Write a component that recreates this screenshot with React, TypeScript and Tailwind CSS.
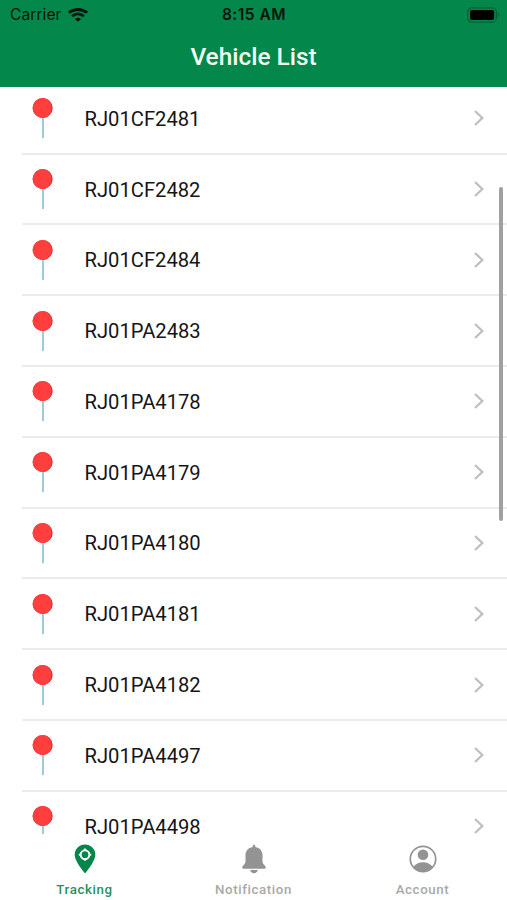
import React from 'react';

const vehicles = [
  'RJ01CF2481',
  'RJ01CF2482',
  'RJ01CF2484',
  'RJ01PA2483',
  'RJ01PA4178',
  'RJ01PA4179',
  'RJ01PA4180',
  'RJ01PA4181',
  'RJ01PA4182',
  'RJ01PA4497',
  'RJ01PA4498',
];

function WifiIcon() {
  return (
    <svg width="20" height="14" viewBox="0 0 20 14" fill="none" stroke="#02150a">
      <path d="M.9 4.7C6 .4 14 .4 19.1 4.7" strokeWidth="2.9" />
      <path d="M4.1 8.2c3.3-3 8.5-3 11.8 0" strokeWidth="2.7" />
      <path d="M10 13.8 7 10.9c1.7-1.5 4.3-1.5 6 0z" fill="#02150a" stroke="none" />
    </svg>
  );
}

function BatteryIcon() {
  return (
    <svg width="33" height="16" viewBox="0 0 33 16" fill="none">
      <rect x="0.8" y="0.8" width="28.6" height="14.4" rx="4.2" stroke="#046234" strokeWidth="1.3" />
      <rect x="3" y="3" width="24.2" height="10" rx="2" fill="#000" />
      <path d="M31 5.7c1.7.7 1.7 3.9 0 4.6z" fill="#046234" />
    </svg>
  );
}

function PinIcon() {
  return (
    <svg width="22" height="42" viewBox="0 0 22 42" className="shrink-0">
      <path d="M10 20h2v20.5l-1 1-1-1z" fill="#9fcbd8" />
      <circle cx="10.7" cy="11" r="10" fill="#d8323b" />
      <path d="M17.3 3.6A10 10 0 1 0 15.5 19.8C20.5 15.5 20.3 8 17.3 3.6z" fill="#ff3e3e" />
    </svg>
  );
}

function ChevronIcon() {
  return (
    <svg width="12" height="18" viewBox="0 0 12 18" fill="none" stroke="#c0c0c2" strokeWidth="2.4">
      <path d="M2 2l7.3 7L2 16" />
    </svg>
  );
}

function TrackingIcon() {
  return (
    <svg width="22" height="30" viewBox="0 0 22 30">
      <path d="M11 .5C5.2 .5 .7 4.9 .7 10.6.7 17.8 11 29.5 11 29.5S21.3 17.8 21.3 10.6C21.3 4.9 16.8.5 11 .5z" fill="#02864a" />
      <circle cx="11" cy="10.7" r="4.3" fill="none" stroke="#fff" strokeWidth="1.9" />
      <path d="M11 4.1 13.4 6.7H8.6zM11 17.3 8.6 14.7h4.8zM4.4 10.7 7 8.3v4.8zM17.6 10.7 15 13.1V8.3z" fill="#fff" />
    </svg>
  );
}

function BellIcon() {
  return (
    <svg width="26" height="30" viewBox="0 0 26 30" fill="#939393">
      <path d="M13 .8c-.9 0-1.3.6-1.3 1.4v.8C7.1 3.7 4.6 7 4.5 11v6.5c0 2.7-3.3 4.3-3.3 6 0 .8.5 1.2 1.3 1.2h21c.8 0 1.3-.4 1.3-1.2 0-1.7-3.3-3.3-3.3-6V11c-.1-4-2.6-7.300-7.200-8v-.8C14.300 1.400 13.900.8 13 .8z" />
      <path d="M9.2 26h7.6c-.4 1.9-1.8 3.2-3.8 3.2S9.6 27.9 9.2 26z" />
    </svg>
  );
}

function AccountIcon() {
  return (
    <svg width="28" height="28" viewBox="0 0 28 28">
      <circle cx="14" cy="14" r="12.7" fill="none" stroke="#939393" strokeWidth="1.7" />
      <circle cx="14" cy="9.7" r="5.3" fill="#939393" />
      <path d="M4.1 22C6.5 18.8 9.8 17.2 14 17.2s7.5 1.6 9.9 4.8a12.8 12.8 0 0 1-19.8 0z" fill="#939393" />
    </svg>
  );
}

function VehicleRow({ name }: { name: string }) {
  return (
    <li className="ml-[22px] flex h-[70.8px] shrink-0 items-center border-b-2 border-[#ebebec] pl-[10px] pr-[22px]">
      <PinIcon />
      <span className="ml-[30.5px] flex-1 pt-[1px] text-[20.2px] leading-4 text-[#151515]">{name}</span>
      <ChevronIcon />
    </li>
  );
}

function Tab({ icon, label, active }: { icon: React.ReactNode; label: string; active?: boolean }) {
  return (
    <div className={`flex flex-1 flex-col items-center ${active ? 'text-[#299060]' : 'text-[#a9a9a9]'}`}>
      <div className="flex h-[30px] items-center">{icon}</div>
      <span className="mt-[8px] text-[13.3px] font-medium leading-4 tracking-[0.6px]">{label}</span>
    </div>
  );
}

export default function App() {
  return (
    <div className="relative flex h-[900px] w-full flex-col overflow-hidden bg-white font-[Roboto,sans-serif]">
      <header className="h-[87px] shrink-0 bg-[#03874b]">
        <div className="grid h-[30px] grid-cols-3 items-center pl-[10px] pr-[7px] font-[Inter,sans-serif] text-[#02150a]">
          <div className="flex items-center gap-[6px] text-[15.5px] tracking-[0.1px]">
            <span>Carrier</span>
            <WifiIcon />
          </div>
          <span className="pr-[2px] text-center text-[15.5px] font-semibold tracking-[0.5px]">8:15 AM</span>
          <div className="flex justify-end">
            <BatteryIcon />
          </div>
        </div>
        <h1 className="pt-[12px] text-center text-[24.4px] font-medium leading-[30px] text-[#f4fff2]">Vehicle List</h1>
      </header>

      <ul className="flex h-[747px] shrink-0 flex-col">
        <li className="-mt-[3.2px] h-0 shrink-0" />
        {vehicles.map((name) => (
          <VehicleRow key={name} name={name} />
        ))}
      </ul>

      {/* scroll indicator */}
      <div className="absolute right-[4px] top-[187px] h-[334px] w-[4px] rounded-full bg-[#a0a0a0]" />

      <nav className="relative flex flex-1 bg-white pt-[10px]">
        <Tab icon={<TrackingIcon />} label="Tracking" active />
        <Tab icon={<BellIcon />} label="Notification" />
        <Tab icon={<AccountIcon />} label="Account" />
      </nav>
    </div>
  );
}
